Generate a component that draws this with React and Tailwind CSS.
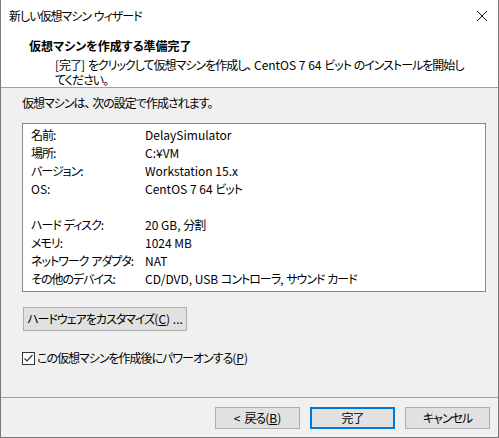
// New VM wizard — final summary page.
import React from 'react';

const ROWS = [
  ['名前:', 'DelaySimulator'],
  ['場所:', 'C:¥VM'],
  ['バージョン:', 'Workstation 15.x'],
  ['OS:', 'CentOS 7 64 ビット'],
  null,
  ['ハード ディスク:', '20 GB, 分割'],
  ['メモリ:', '1024 MB'],
  ['ネットワーク アダプタ:', 'NAT'],
  ['その他のデバイス:', 'CD/DVD, USB コントローラ, サウンド カード'],
];

// tighten the CJK runs so they sit closer to the narrow UI font of the original
function J({ s }) {
  return s.split(/([\u3000-\u30ff\u4e00-\u9fff\uff00-\uffef]+)/).map((p, i) =>
    i % 2 ? (
      <span key={i} className="tracking-[-1px]">
        {p}
      </span>
    ) : (
      p
    ),
  );
}

function WinBtn({ children, primary }) {
  return (
    <button
      className={[
        'h-[22px] w-[85px] bg-[#e1e1e1] text-[12px] leading-none text-black flex items-center justify-center whitespace-nowrap',
        primary ? 'border-2 border-[#0078d7]' : 'border border-[#adadad]',
      ].join(' ')}
    >
      {children}
    </button>
  );
}

export default function App() {
  return (
    <div className="w-[499px] h-[438px] bg-[#f0f0f0] border-x border-b border-[#7a7a7a] flex flex-col text-[12px] text-black whitespace-nowrap font-['Noto_Sans_CJK_JP','Noto_Sans',sans-serif] [font-feature-settings:'palt']">
      {/* title bar */}
      <div className="h-[31px] bg-white flex items-center justify-between pl-[8px] pr-[8px] shrink-0">
        <span className="leading-none">
          <J s="新しい仮想マシン ウィザード" />
        </span>
        <svg width="12" height="12" viewBox="0 0 12 12" className="mr-[2px]">
          <path d="M1 1 L11 11 M11 1 L1 11" stroke="#111" strokeWidth="1" fill="none" />
        </svg>
      </div>

      {/* header */}
      <div className="h-[57px] bg-white border-b border-[#a0a0a0] pt-[7px] shrink-0">
        <div className="pl-[28px] font-bold leading-[16px]">仮想マシンを作成する準備完了</div>
        <div className="pl-[54px] mt-[3px] leading-[15px]">
          <J s="[完了] をクリックして仮想マシンを作成し、 CentOS 7 64 ビット のインストールを開始し" />
          <br />
          <J s="てください。" />
        </div>
      </div>

      {/* body */}
      <div className="h-[309px] pl-[21px] pt-[7px] shrink-0">
        <div className="leading-[16px]">
          <J s="仮想マシンは、 次の設定で作成されます。" />
        </div>

        <div className="mt-[12px] w-[464px] h-[169px] bg-white border border-[#828790] pt-[2px] pl-[8px]">
          {ROWS.map((r, i) =>
            r ? (
              <div key={i} className="flex h-[18px] items-center">
                <span className="w-[114px] shrink-0">
                  <J s={r[0]} />
                </span>
                <span>
                  <J s={r[1]} />
                </span>
              </div>
            ) : (
              <div key={i} className="h-[18px]" />
            ),
          )}
        </div>

        <button className="mt-[15px] ml-[1px] h-[24px] w-[164px] bg-[#e1e1e1] border border-[#adadad] flex items-center justify-center leading-none">
          <J s="ハードウェアをカスタマイズ(" />
          <span className="underline">C</span>) ...
        </button>

        <label className="mt-[19px] flex items-center h-[16px]">
          <span className="w-[13px] h-[13px] border border-[#333] bg-white flex items-center justify-center mr-[2px]">
            <svg width="11" height="11" viewBox="0 0 11 11">
              <path d="M1.5 5.5 L4 8 L9.5 2" stroke="#333" strokeWidth="1.2" fill="none" />
            </svg>
          </span>
          <span className="leading-none">
            <J s="この仮想マシンを作成後にパワーオンする(" />
            <span className="underline">P</span>)
          </span>
        </label>
      </div>

      {/* footer */}
      <div className="flex-1 border-t border-[#a0a0a0] flex justify-end items-start pt-[9px] pr-[8px] gap-[10px]">
        <WinBtn>
          <span className="mr-[4px]">&lt;</span>
          <J s="戻る(" />
          <span className="underline">B</span>)
        </WinBtn>
        <WinBtn primary>
          <J s="完了" />
        </WinBtn>
        <WinBtn>
          <J s="キャンセル" />
        </WinBtn>
      </div>
    </div>
  );
}
